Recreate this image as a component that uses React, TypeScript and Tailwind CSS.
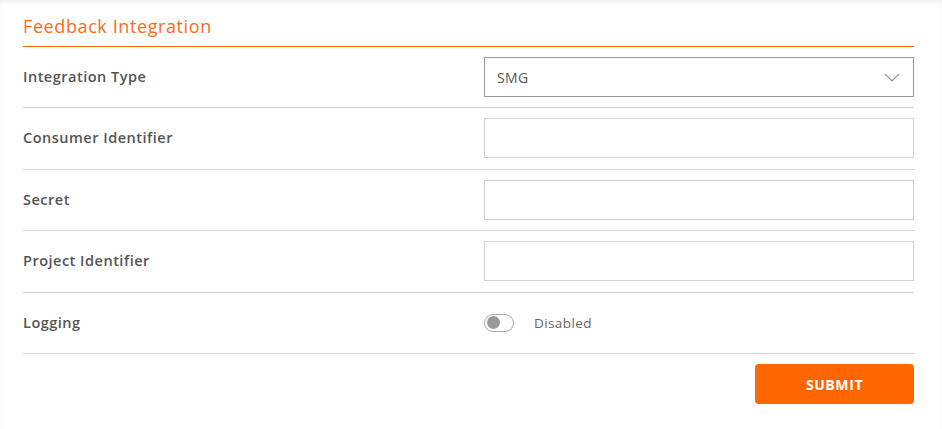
const fields = [
    { label: 'Consumer Identifier' },
    { label: 'Secret' },
    { label: 'Project Identifier' },
];

export default function App() {
    return (
        <div
            className="w-[942px] h-[429px] bg-white shadow-[inset_0_5px_6px_-3px_rgba(0,0,0,0.08)] pl-[23px] pr-[28px]"
            style={{ fontFamily: '"Open Sans", "Liberation Sans", sans-serif' }}
        >
            {/* Header */}
            <div className="pt-[14px] pb-[8px] border-b border-[#ff6600]">
                <h2 className="text-[18px] leading-[24px] tracking-[0.6px] text-[#ff6a1a] font-normal">Feedback Integration</h2>
            </div>

            {/* Integration Type */}
            <div className="flex items-center py-[10px] border-b border-[#d0d0d0]">
                <label className="flex-1 text-[14.5px] tracking-[0.5px] font-semibold text-[#555]">Integration Type</label>
                <div className="w-[430px] h-10 border border-[#9a9a9a] flex items-center justify-between pl-[12px] pr-[13px]">
                    <span className="text-[14px] tracking-[0.4px] text-[#555]">SMG</span>
                    <svg width="16" height="9" viewBox="0 0 16 9" fill="none">
                        <polyline points="1,1 8,8 15,1" stroke="#999" strokeWidth="1.2" />
                    </svg>
                </div>
            </div>

            {/* Text fields */}
            {fields.map((f) => (
                <div key={f.label} className="flex items-center py-[10.25px] border-b border-[#d0d0d0]">
                    <label className="flex-1 text-[14.5px] tracking-[0.5px] font-semibold text-[#555]">{f.label}</label>
                    <input
                        type="text"
                        className="w-[430px] h-10 border border-[#d0d0d0] outline-none px-3 text-[14px]"
                    />
                </div>
            ))}

            {/* Logging */}
            <div className="flex items-center py-[10.25px] border-b border-[#d0d0d0]">
                <label className="flex-1 text-[14.5px] tracking-[0.5px] font-semibold text-[#555]">Logging</label>
                <div className="w-[430px] h-10 flex items-center">
                    <span className="w-[30px] h-[18px] rounded-full border border-[#aaa] flex items-center px-[2px]">
                        <span className="w-[13px] h-[13px] rounded-full bg-[#999]" />
                    </span>
                    <span className="ml-[20px] text-[13.5px] tracking-[0.4px] text-[#666]">Disabled</span>
                </div>
            </div>

            {/* Action */}
            <div className="flex justify-end pt-[10px]">
                <button className="w-[159px] h-10 rounded-[4px] bg-[#ff6600] text-white text-[14px] tracking-[0.6px] font-bold">
                    SUBMIT
                </button>
            </div>
        </div>
    );
}
